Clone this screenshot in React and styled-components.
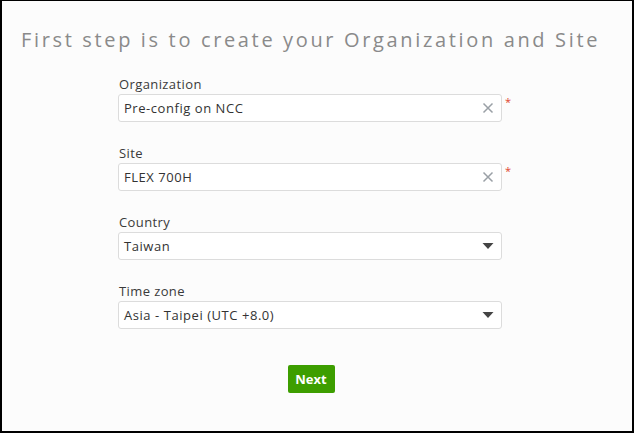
import React from "react";
import styled, { createGlobalStyle } from "styled-components";

const Global = createGlobalStyle`
  html, body { margin: 0; padding: 0; }
  body { background: #fcfcfc; font-family: "Open Sans", "Noto Sans", sans-serif; }
  * { box-sizing: border-box; }
`;

const Frame = styled.div`
  width: 634px;
  height: 433px;
  border: 1px solid #000;
  border-left-width: 2px;
  border-bottom-width: 2px;
  border-right-width: 2px;
  background: #fcfcfc;
  display: flex;
  flex-direction: column;
`;

const Title = styled.h1`
  margin: 25px 0 0 19px;
  font-family: "Open Sans", sans-serif;
  font-weight: 400;
  font-size: 20px;
  line-height: 28px;
  letter-spacing: 2.65px;
  color: #8a8a8a;
  white-space: nowrap;
`;

const Form = styled.div`
  display: flex;
  flex-direction: column;
  margin: 21px 0 0 116px;
  gap: 22px;
`;

const Field = styled.div`
  display: flex;
  flex-direction: column;
  gap: 1px;
`;

const Label = styled.label`
  font-family: "Open Sans", sans-serif;
  font-size: 13px;
  line-height: 18px;
  letter-spacing: 0.4px;
  color: #3a3a3a;
  padding-left: 1px;
`;

const Row = styled.div`
  display: flex;
  align-items: flex-start;
  gap: 3px;
`;

const Box = styled.div`
  width: 384px;
  height: 28px;
  border: 1px solid #dcdcdc;
  border-radius: 3px;
  background: #fff;
  display: flex;
  align-items: center;
  justify-content: space-between;
  padding: 0 7px 0 5px;
`;

const Value = styled.span`
  font-family: "Open Sans", sans-serif;
  font-size: 13px;
  letter-spacing: 0.55px;
  color: #333;
`;

const Required = styled.span`
  color: #e0442e;
  font-size: 11px;
  line-height: 11px;
  margin-top: 2px;
`;

const Actions = styled.div`
  width: 386px;
  display: flex;
  justify-content: center;
  margin-top: 14px;
`;

const Button = styled.button`
  width: 47px;
  height: 28px;
  border: none;
  border-radius: 2px;
  background: #3d9e00;
  color: #fff;
  font-family: "Open Sans", sans-serif;
  font-weight: 700;
  font-size: 13px;
  padding: 0;
`;

const ClearIcon = () => (
  <svg width="12" height="12" viewBox="0 0 12 12">
    <path d="M1.5 1.5 L10.5 10.5 M10.5 1.5 L1.5 10.5" stroke="#9aa0a6" strokeWidth="1.5" fill="none" />
  </svg>
);

const Caret = () => (
  <svg width="12" height="8" viewBox="0 0 12 8">
    <path d="M0.5 1 L11.5 1 L6 7 Z" fill="#444" />
  </svg>
);

const fields = [
  { label: "Organization", value: "Pre-config on NCC", kind: "input", required: true },
  { label: "Site", value: "FLEX 700H", kind: "input", required: true },
  { label: "Country", value: "Taiwan", kind: "select" },
  { label: "Time zone", value: "Asia - Taipei (UTC +8.0)", kind: "select" },
];

export default function App() {
  return (
    <>
      <Global />
      <Frame>
        <Title>First step is to create your Organization and Site</Title>
        <Form>
          {fields.map((f) => (
            <Field key={f.label}>
              <Label>{f.label}</Label>
              <Row>
                <Box>
                  <Value>{f.value}</Value>
                  {f.kind === "input" ? <ClearIcon /> : <Caret />}
                </Box>
                {f.required && <Required>*</Required>}
              </Row>
            </Field>
          ))}
          <Actions>
            <Button>Next</Button>
          </Actions>
        </Form>
      </Frame>
    </>
  );
}
